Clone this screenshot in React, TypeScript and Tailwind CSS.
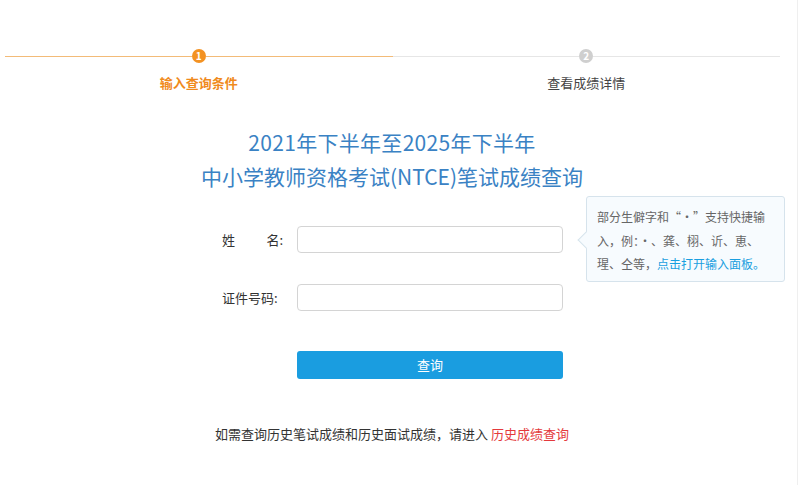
const FONT = "font-['Microsoft_YaHei','Noto_Sans_CJK_SC',sans-serif]";

function StepHalf({ n, active }: { n: number; active: boolean }) {
  const line = active ? "bg-[#f3bb78]" : "bg-[#e6e6e6]";
  return (
    <div className="flex flex-1 items-center">
      <div className={`h-px flex-1 ${line}`} />
      <div
        className={`flex h-[14px] w-[14px] items-center justify-center rounded-full text-[10px] font-bold leading-none text-white ${
          active ? "bg-[#f39223]" : "bg-[#cfcfcf]"
        }`}
      >
        {n}
      </div>
      <div className={`h-px flex-1 ${line}`} />
    </div>
  );
}

export default function App() {
  return (
    <div className={`h-[485px] w-[798px] border-r border-[#efefef] bg-white ${FONT}`}>
      <div className="w-[784px]">
        {/* steps */}
        <div className="ml-[5px] mr-[4px] pt-[49px]">
          <div className="flex">
            <StepHalf n={1} active />
            <StepHalf n={2} active={false} />
          </div>
          <div className="mt-[11px] flex text-[13px] leading-[18px]">
            <div className="flex-1 text-center font-bold text-[#f08a1c]">输入查询条件</div>
            <div className="flex-1 text-center text-[#444]">查看成绩详情</div>
          </div>
        </div>

        {/* title */}
        <h1 className="mt-[33px] text-center text-[21px] leading-[34px] text-[#3a82c4]">
          <span className="tracking-[0.3px]">2021年下半年至2025年下半年</span>
          <br />
          中小学教师资格考试(NTCE)笔试成绩查询
        </h1>

        {/* form */}
        <div className="ml-[222px] mt-[33px] text-[13px] text-[#333]">
          <div className="relative flex h-[27px] items-center">
            <div className="flex w-[61px] justify-between">
              <span>姓</span>
              <span>名:</span>
            </div>
            <input className="ml-[14px] h-[27px] w-[266px] rounded-[4px] border border-[#d4d4d4] outline-none" />

            <div className="absolute left-[364px] top-[-30px] h-[86px] w-[199px] rounded-[3px] border border-[#d6e3ec] bg-[#f7fbfe] pl-[10px] pt-[8px] text-[12px] leading-[23.5px] text-[#666]">
              <div className="absolute left-[-7px] top-[37px] h-[12px] w-[12px] rotate-45 border-b border-l border-[#d6e3ec] bg-[#f7fbfe]" />
              <div className="relative">
                部分生僻字和“·”支持快捷输
                <br />
                入，例：·、龚、栩、䜣、恵、
                <br />
                瑆、仝等，<span className="text-[#1a9fe0]">点击打开输入面板。</span>
              </div>
            </div>
          </div>

          <div className="mt-[31px] flex h-[27px] items-center">
            <div className="w-[61px]">证件号码:</div>
            <input className="ml-[14px] h-[27px] w-[266px] rounded-[4px] border border-[#d4d4d4] outline-none" />
          </div>

          <button className="ml-[75px] mt-[40px] h-[28px] w-[266px] rounded-[3px] bg-[#1a9de0] text-[13px] text-white">
            查询
          </button>
        </div>

        {/* footer note */}
        <p className="mt-[46px] text-center text-[13px] leading-[18px] text-[#333]">
          如需查询历史笔试成绩和历史面试成绩，请进入 <span className="text-[#e4393c]">历史成绩查询</span>
        </p>
      </div>
    </div>
  );
}
